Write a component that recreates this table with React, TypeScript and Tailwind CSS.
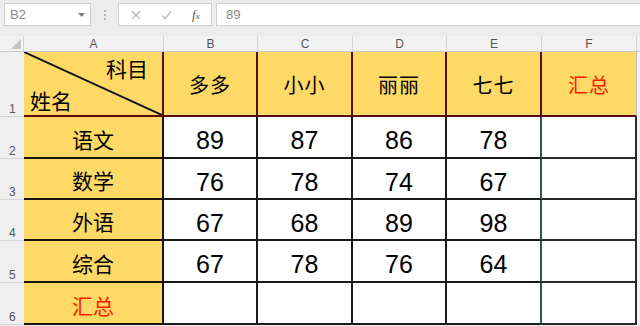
import React from "react";

const CJK = "font-['Noto_Sans_CJK_SC','Microsoft_YaHei',sans-serif]";
const NUM = "font-['Liberation_Sans',Arial,sans-serif]";

const rows: { label: string; red?: boolean; vals: (number | null)[]; h: string }[] = [
  { label: "语文", vals: [89, 87, 86, 78], h: "h-[42px]" },
  { label: "数学", vals: [76, 78, 74, 67], h: "h-[41px]" },
  { label: "外语", vals: [67, 68, 89, 98], h: "h-[41px]" },
  { label: "综合", vals: [67, 78, 76, 64], h: "h-[42px]" },
  { label: "汇总", red: true, vals: [null, null, null, null], h: "h-[42px]" },
];

function RowHead({ n, h }: { n: number; h: string }) {
  return (
    <div className={`${h} w-[24px] shrink-0 bg-[#efefef] border-b border-[#d6d6d6] flex items-end pl-[9px] pb-[1px] text-[12px] leading-none text-[#555] ${NUM}`}>
      {n}
    </div>
  );
}

export default function App() {
  return (
    <div className="w-[640px] h-[326px] overflow-hidden bg-[#ececec] select-none">
      {/* Toolbar */}
      <div className="h-[36px] flex items-start pt-[3px] pl-[4px] bg-[#ececec]">
        <div className="w-[87px] h-[23px] bg-white border border-[#cfcfcf] flex items-center justify-between pl-[5px] pr-[5px]">
          <span className={`text-[13px] text-[#8a8a8a] ${NUM}`}>B2</span>
          <svg width="7" height="4" viewBox="0 0 7 4"><path d="M0 0H7L3.5 4Z" fill="#7a7a7a" /></svg>
        </div>
        <div className="w-[27px] h-[23px] flex flex-col items-center justify-center gap-[2px]">
          <span className="w-[2px] h-[2px] bg-[#b5b5b5]" />
          <span className="w-[2px] h-[2px] bg-[#b5b5b5]" />
          <span className="w-[2px] h-[2px] bg-[#b5b5b5]" />
        </div>
        <div className="w-[94px] h-[23px] bg-white border border-[#cfcfcf] flex items-center">
          <svg className="ml-[12px]" width="10" height="10" viewBox="0 0 10 10">
            <path d="M1 1L9 9M9 1L1 9" stroke="#b8b8b8" strokeWidth="1.2" />
          </svg>
          <svg className="ml-[20px]" width="11" height="10" viewBox="0 0 11 10">
            <path d="M1 5.5L4 8.5L10 1.5" stroke="#b8b8b8" strokeWidth="1.3" fill="none" />
          </svg>
          <span className="ml-[20px] font-['Liberation_Serif',serif] italic text-[13px] text-[#555] leading-none">
            f<span className="text-[9px]">x</span>
          </span>
        </div>
        <div className="ml-[4px] flex-1 h-[23px] bg-white border border-[#cfcfcf] border-r-0 flex items-center pl-[9px]">
          <span className={`text-[13px] text-[#8a8a8a] ${NUM}`}>89</span>
        </div>
      </div>

      {/* Column header row */}
      <div className={`h-[16px] flex bg-[#f2f2f2] border-b border-[#c9c9c9] text-[12px] leading-none text-[#555] ${NUM}`}>
        <div className="w-[24px] shrink-0 border-r border-[#d4d4d4] flex items-end justify-end pr-[2px] pb-[2px]">
          <svg width="10" height="10" viewBox="0 0 10 10"><path d="M10 0V10H0Z" fill="#c4c4c4" /></svg>
        </div>
        <div className="w-[140px] shrink-0 border-r border-[#d4d4d4] flex items-center justify-center">A</div>
        <div className="w-[94px] shrink-0 border-r border-[#d4d4d4] flex items-center justify-center">B</div>
        <div className="w-[95px] shrink-0 border-r border-[#d4d4d4] flex items-center justify-center">C</div>
        <div className="w-[94px] shrink-0 border-r border-[#d4d4d4] flex items-center justify-center">D</div>
        <div className="w-[95px] shrink-0 border-r border-[#d4d4d4] flex items-center justify-center">E</div>
        <div className="w-[95px] shrink-0 border-r border-[#d4d4d4] flex items-center justify-center">F</div>
        <div className="flex-1" />
      </div>

      {/* Row 1 */}
      <div className="flex h-[65px]">
        <RowHead n={1} h="h-[65px]" />
        <div className="relative w-[140px] shrink-0 bg-[#ffd966] border-r-2 border-b-2 border-[#5c0a0a]">
          <svg className="absolute inset-0" width="138" height="63" viewBox="0 0 138 63" preserveAspectRatio="none">
            <line x1="0" y1="0" x2="138" y2="63" stroke="#111" strokeWidth="2" />
          </svg>
          <div className={`absolute right-[14px] top-[6px] text-[21px] leading-none text-black ${CJK}`}>科目</div>
          <div className={`absolute left-[6px] bottom-[4px] text-[21px] leading-none text-black ${CJK}`}>姓名</div>
        </div>
        {["多多", "小小", "丽丽", "七七"].map((t, i) => (
          <div
            key={t}
            className={`${i === 0 || i === 2 ? "w-[94px]" : "w-[95px]"} shrink-0 bg-[#ffd966] border-r-2 border-b-2 border-[#5c0a0a] flex items-center justify-center pt-[2px] text-[20px] tracking-[1px] text-black ${CJK}`}
          >
            {t}
          </div>
        ))}
        <div className={`w-[95px] shrink-0 bg-[#ffd966] border-r border-b-2 border-b-[#5c0a0a] border-r-[#bdbdbd] flex items-center justify-center pt-[2px] text-[20px] tracking-[1px] text-[#ff1a00] ${CJK}`}>
          汇总
        </div>
        <div className="flex-1 bg-[#f4f4f4]" />
      </div>

      {/* Data rows */}
      {rows.map((r, ri) => (
        <div key={r.label} className={`flex ${r.h}`}>
          <RowHead n={ri + 2} h={r.h} />
          <div
            className={`w-[140px] shrink-0 bg-[#ffd966] border-r-2 border-b-2 border-[#1c1208] flex items-center justify-center pt-[5px] text-[21px] ${r.red ? "text-[#ff1a00]" : "text-black"} ${CJK}`}
          >
            {r.label}
          </div>
          {r.vals.map((v, ci) => (
            <div
              key={ci}
              className={`${ci === 0 || ci === 2 ? "w-[94px]" : "w-[95px]"} shrink-0 bg-white border-b-2 border-b-[#1a1a1a] border-r-2 ${ci === 3 ? "border-r-[#2e5a52]" : "border-r-[#1a1a1a]"} flex items-center justify-center pt-[7px] text-[25px] leading-none text-black ${NUM}`}
            >
              {v ?? ""}
            </div>
          ))}
          <div className="w-[95px] shrink-0 bg-white border-r-2 border-b-2 border-[#2a2a2a]" />
          <div className="flex-1 bg-[#f4f4f4]" />
        </div>
      ))}
    </div>
  );
}
